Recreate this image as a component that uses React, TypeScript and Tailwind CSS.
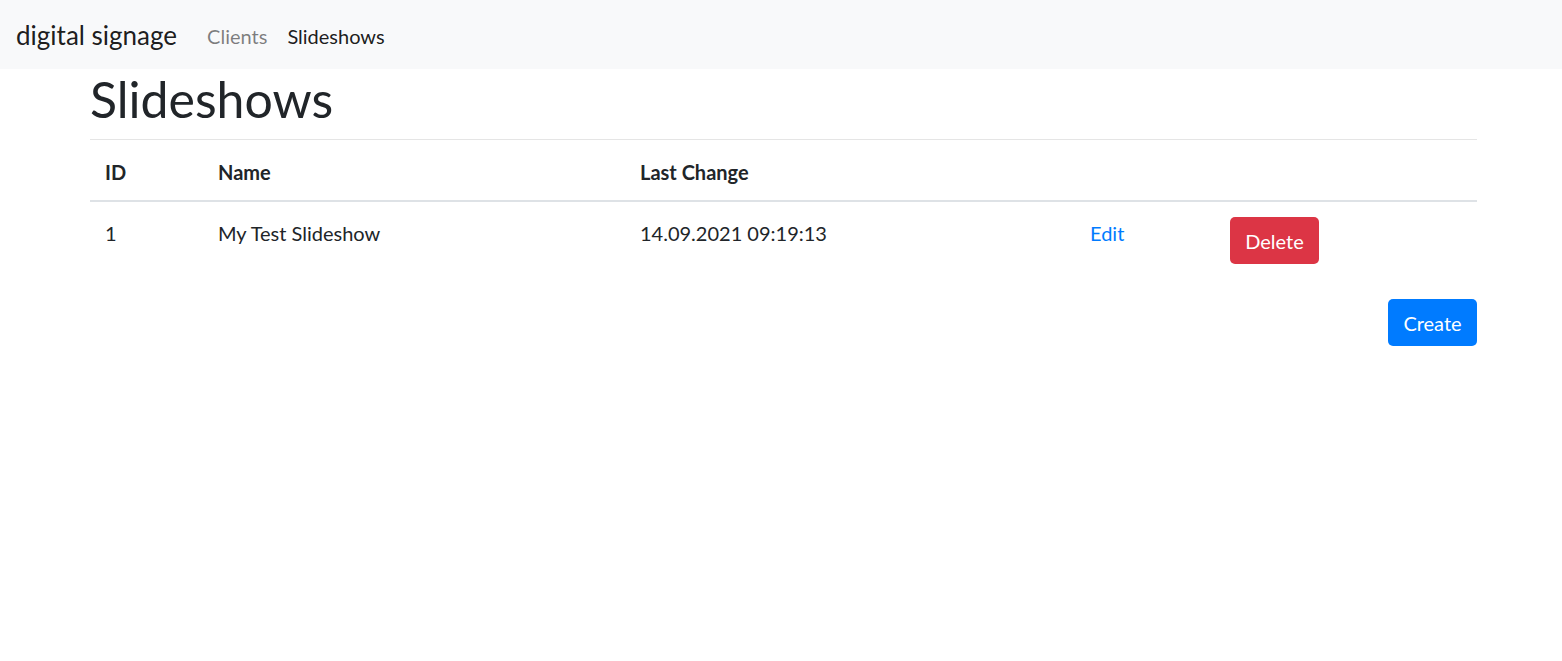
import React from "react";

const slideshows = [
  { id: 1, name: "My Test Slideshow", lastChange: "14.09.2021 09:19:13" },
];

const App = () => {
  return (
    <div className="min-h-[661px] bg-white text-[#212529] text-[20px] leading-[30px] font-['Lato','Noto_Sans',sans-serif]">
      <nav className="h-[69px] w-full bg-[#f8f9fa] flex items-center pl-[16px] pt-[2px]">
        <span className="text-[26px] leading-[37px] text-black/90 mr-[20px]">
          digital signage
        </span>
        <a className="px-[10px] text-black/50 cursor-pointer">Clients</a>
        <a className="px-[10px] text-black/90 cursor-pointer">Slideshows</a>
      </nav>

      <main className="ml-[90px] w-[1387px] flex flex-col">
        <h1 className="text-[50px] leading-[60px] font-normal mb-[10px]">
          Slideshows
        </h1>
        <hr className="border-0 border-t border-black/10 m-0" />

        <table className="w-full border-collapse text-left">
          <thead>
            <tr className="border-b-2 border-[#dee2e6]">
              <th className="w-[113px] px-[15px] pt-[17px] pb-[13px] font-bold">ID</th>
              <th className="w-[422px] px-[15px] pt-[17px] pb-[13px] font-bold">Name</th>
              <th className="w-[450px] px-[15px] pt-[17px] pb-[13px] font-bold">Last Change</th>
              <th className="w-[140px] p-[15px]"></th>
              <th className="p-[15px]"></th>
            </tr>
          </thead>
          <tbody>
            {slideshows.map((s) => (
              <tr key={s.id}>
                <td className="px-[15px] pt-[16px] pb-[14px] align-top">{s.id}</td>
                <td className="px-[15px] pt-[16px] pb-[14px] align-top">{s.name}</td>
                <td className="px-[15px] pt-[16px] pb-[14px] align-top">{s.lastChange}</td>
                <td className="px-[15px] pt-[16px] pb-[14px] align-top">
                  <a className="text-[#007bff] cursor-pointer">Edit</a>
                </td>
                <td className="p-[15px] align-top">
                  <button className="h-[47px] w-[89px] rounded-[5px] bg-[#dc3545] text-white">
                    Delete
                  </button>
                </td>
              </tr>
            ))}
          </tbody>
        </table>

        <div className="flex justify-end mt-[20px]">
          <button className="h-[47px] w-[89px] rounded-[5px] bg-[#007bff] text-white">
            Create
          </button>
        </div>
      </main>
    </div>
  );
};

export default App;
